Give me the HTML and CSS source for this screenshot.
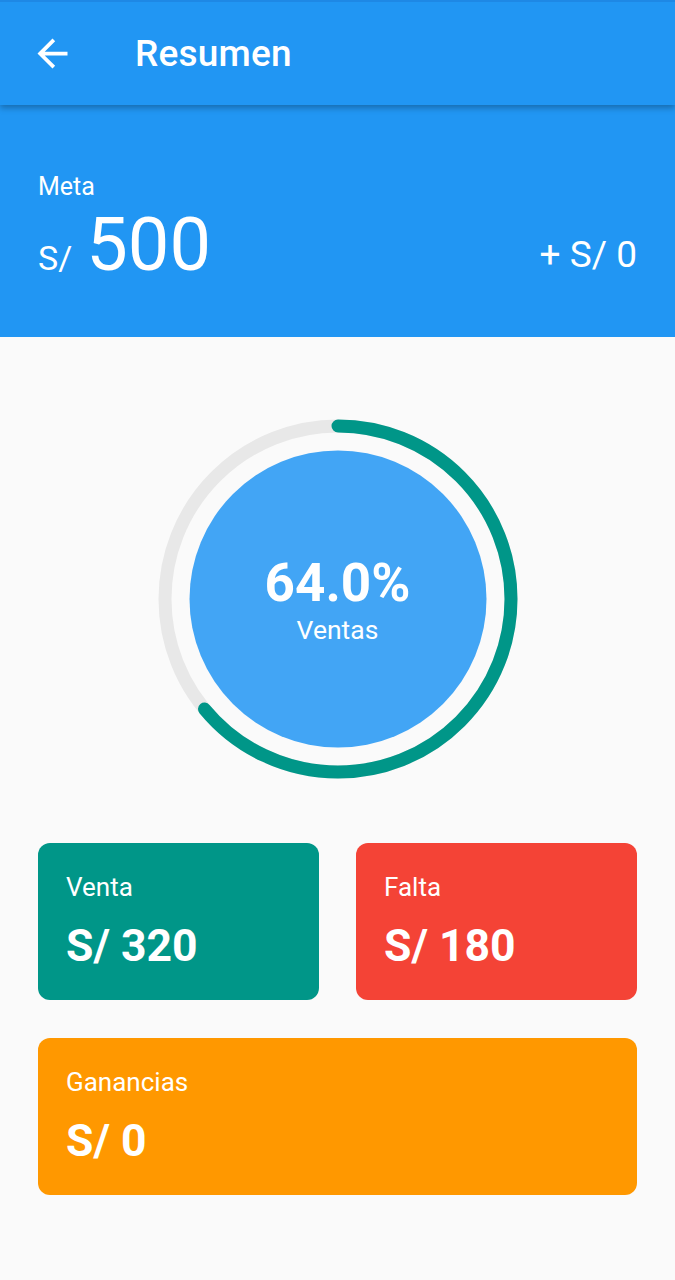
FILE: index.html
```html
<!DOCTYPE html>
<html lang="es">
<head>
<meta charset="utf-8">
<title>Resumen</title>
<link rel="stylesheet" href="styles.css">
</head>
<body>
<header class="appbar">
  <svg class="back" viewBox="0 0 24 24" width="45" height="45" aria-hidden="true">
    <path d="M20 11H7.83l5.59-5.59L12 4l-8 8 8 8 1.41-1.41L7.83 13H20v-2z" fill="#fff"/>
  </svg>
  <h1 class="title">Resumen</h1>
</header>

<section class="goal">
  <div class="goal-label">Meta</div>
  <div class="goal-row">
    <div class="goal-amount">
      <span class="goal-cur">S/</span>
      <span class="goal-num">500</span>
    </div>
    <div class="goal-extra">+ S/ 0</div>
  </div>
</section>

<main class="content">
  <div class="gauge">
    <svg class="gauge-svg" viewBox="0 0 360 360" width="360" height="360" aria-hidden="true">
      <circle cx="180" cy="180" r="173" fill="none" stroke="#e8e8e8" stroke-width="13"/>
      <circle class="arc" cx="180" cy="180" r="173" fill="none" stroke="#009688" stroke-width="13"
        stroke-linecap="round" stroke-dasharray="695.7 1087" transform="rotate(-90 180 180)"/>
      <circle cx="180" cy="180" r="148.5" fill="#42a5f5"/>
    </svg>
    <div class="gauge-text">
      <div class="gauge-pct">64.0%</div>
      <div class="gauge-lbl">Ventas</div>
    </div>
  </div>

  <div class="cards">
    <div class="card card-teal">
      <div class="card-lbl">Venta</div>
      <div class="card-val">S/ 320</div>
    </div>
    <div class="card card-red">
      <div class="card-lbl">Falta</div>
      <div class="card-val">S/ 180</div>
    </div>
    <div class="card card-orange card-wide">
      <div class="card-lbl">Ganancias</div>
      <div class="card-val">S/ 0</div>
    </div>
  </div>
</main>
</body>
</html>
```

FILE: styles.css
```css
* { box-sizing: border-box; }

html, body {
  margin: 0;
  padding: 0;
}

body {
  width: 675px;
  min-height: 1280px;
  background: #fafafa;
  font-family: Roboto, "Noto Sans", "Liberation Sans", sans-serif;
  color: #fff;
}

.appbar {
  height: 105px;
  background: #2196f3;
  border-top: 2px solid #1e88e5;
  display: flex;
  align-items: center;
  box-shadow: 0 3px 6px rgba(0, 0, 0, 0.28);
  position: relative;
  z-index: 2;
}

.back {
  display: block;
  margin-left: 30px;
  flex: none;
}

.title {
  margin: 0 0 0 60px;
  font-size: 37px;
  font-weight: 500;
  line-height: 1;
  letter-spacing: 0.2px;
}

.goal {
  background: #2196f3;
  padding: 68px 38px 55px 38px;
}

.goal-label {
  font-size: 25px;
  line-height: 27px;
}

.goal-row {
  display: flex;
  justify-content: space-between;
  align-items: baseline;
  margin-top: 8px;
}

.goal-amount {
  display: flex;
  align-items: baseline;
}

.goal-cur {
  font-size: 34px;
  line-height: 1;
  margin-right: 14px;
}

.goal-num {
  font-size: 74px;
  line-height: 1;
}

.goal-extra {
  font-size: 37px;
  line-height: 1;
  position: relative;
  top: -3px;
}

.content {
  padding: 82px 38px 0 38px;
}

.gauge {
  display: grid;
  justify-content: center;
  align-items: center;
  justify-items: center;
}

.gauge-svg {
  grid-area: 1 / 1;
  display: block;
}

.gauge-text {
  grid-area: 1 / 1;
  display: flex;
  flex-direction: column;
  align-items: center;
}

.gauge-pct {
  font-size: 53px;
  font-weight: 700;
  line-height: 60px;
}

.gauge-lbl {
  font-size: 26.5px;
  line-height: 30px;
  margin-top: 2px;
}

.cards {
  margin-top: 64px;
  display: grid;
  grid-template-columns: 1fr 1fr;
  gap: 38px 37px;
}

.card {
  height: 157px;
  border-radius: 12px;
  padding: 30px 28px 0 28px;
}

.card-wide {
  grid-column: 1 / span 2;
}

.card-teal { background: #009688; }
.card-red { background: #f44336; }
.card-orange { background: #ff9800; }

.card-lbl {
  font-size: 26px;
  line-height: 28px;
}

.card-val {
  font-size: 44.5px;
  font-weight: 700;
  line-height: 50px;
  margin-top: 20px;
}
```
